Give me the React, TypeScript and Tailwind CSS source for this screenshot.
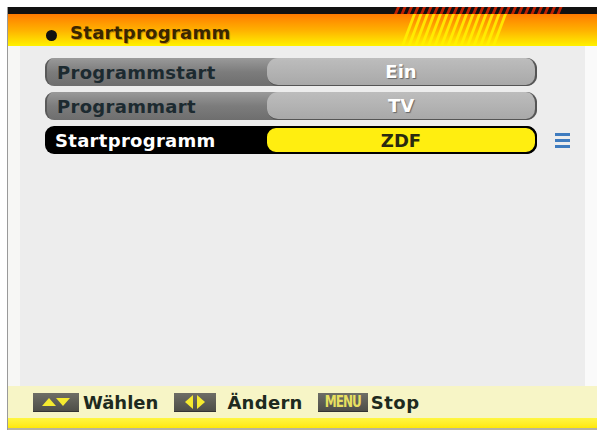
const font = { fontFamily: '"DejaVu Sans", "Liberation Sans", sans-serif' };

const Row = ({ label, value, active }: { label: string; value: string; active?: boolean }) => (
    <div
        className={`flex h-[28px] w-[492px] rounded-l-[9px] rounded-r-[10px] ${
            active ? "bg-black" : "bg-gradient-to-b from-[#9a9a9a] via-[#7c7c7c] to-[#6e6e6e] border-l-2 border-[#5a5a5a]"
        }`}
    >
        <div
            className={`w-[220px] pl-[10px] flex items-center text-[18px] font-bold tracking-[0.3px] ${
                active ? "text-white" : "text-[#1c2a30]"
            }`}
        >
            {label}
        </div>
        <div
            className={`flex-1 flex items-center justify-center rounded-[11px] text-[18px] font-bold ${
                active
                    ? "bg-[#ffee10] border-2 border-black text-[#2a2a10]"
                    : "bg-gradient-to-b from-[#bdbdbd] to-[#a9a9a9] border-r-2 border-b border-[#555] text-white [text-shadow:1px_1px_1px_#666]"
            }`}
        >
            {value}
        </div>
    </div>
);

const KeyBox = ({ w, children }: { w: string; children: React.ReactNode }) => (
    <div className={`${w} h-[19px] flex items-center justify-center bg-gradient-to-b from-[#6e6e66] to-[#4e4e48] border-b border-[#333]`}>
        {children}
    </div>
);

const App = () => {
    return (
        <div className="w-[601px] h-[432px] bg-white pt-[7px] pl-[7px] pr-[4px] pb-[2px]" style={font}>
            <div className="flex flex-col h-full border-l border-[#9a9a9a]">
                {/* header */}
                <div className="relative h-[39px] shrink-0">
                    <div className="h-[7px] bg-[#111]" />
                    <div className="h-[32px] bg-gradient-to-b from-[#ff7a00] via-[#ffb000] to-[#fff200] flex items-center pl-[38px] pt-[5px]">
                        <span className="w-[11px] h-[11px] rounded-full bg-[#111] mr-[13px] mt-[5px]" />
                        <span className="text-[18px] font-bold tracking-[0.3px] text-[#3a2600] [text-shadow:1px_1px_0_#d09000]">
                            Startprogramm
                        </span>
                    </div>
                    <svg className="absolute left-[383px] top-0" width="180" height="39" viewBox="0 0 180 39">
                        {Array.from({ length: 26 }).map((_, i) => (
                            <polygon
                                key={"r" + i}
                                points={`${6 + i * 6.5},0 ${9 + i * 6.5},0 ${6 + i * 6.5},7 ${3 + i * 6.5},7`}
                                fill="#c02000"
                            />
                        ))}
                        {Array.from({ length: 15 }).map((_, i) => (
                            <polygon
                                key={"y" + i}
                                points={`${22 + i * 6.5},7 ${25 + i * 6.5},7 ${13 + i * 6.5},39 ${10 + i * 6.5},39`}
                                fill="#fff200"
                                opacity="0.85"
                            />
                        ))}
                    </svg>
                </div>
                {/* content */}
                <div className="flex-1 flex bg-[#ededed]">
                    <div className="w-[12px] bg-[#f7f7f5]" />
                    <div className="flex-1 pt-[12px] pl-[25px] flex flex-col gap-[6px]">
                        <Row label="Programmstart" value="Ein" />
                        <Row label="Programmart" value="TV" />
                        <div className="flex items-center">
                            <Row label="Startprogramm" value="ZDF" active />
                            <div className="ml-[18px] flex flex-col gap-[3px]">
                                <span className="w-[15px] h-[3px] bg-[#3f7cbf]" />
                                <span className="w-[15px] h-[3px] bg-[#3f7cbf]" />
                                <span className="w-[15px] h-[3px] bg-[#3f7cbf]" />
                            </div>
                        </div>
                    </div>
                    <div className="w-[12px] bg-[#fafafa]" />
                </div>
                {/* footer */}
                <div className="h-[32px] shrink-0 bg-[#f7f5c6] flex items-center pl-[25px] text-[18px] font-bold text-[#1e2a20]">
                    <KeyBox w="w-[46px]">
                        <svg width="30" height="10" viewBox="0 0 30 10">
                            <polygon points="1,9 8,1 15,9" fill="#f5ea30" />
                            <polygon points="15,1 29,1 22,9" fill="#f5ea30" />
                        </svg>
                    </KeyBox>
                    <span className="ml-[4px]">Wählen</span>
                    <div className="ml-[16px]">
                        <KeyBox w="w-[42px]">
                            <svg width="22" height="14" viewBox="0 0 22 14">
                                <polygon points="1,7 9,0 9,14" fill="#f5ea30" />
                                <polygon points="21,7 13,0 13,14" fill="#f5ea30" />
                            </svg>
                        </KeyBox>
                    </div>
                    <span className="ml-[11px] tracking-[0.3px]">Ändern</span>
                    <div className="ml-[15px]">
                        <KeyBox w="w-[50px]">
                            <span className="text-[12px] font-bold text-[#e8e060] tracking-[-1px] scale-y-125">MENU</span>
                        </KeyBox>
                    </div>
                    <span className="ml-[3px] tracking-[0.5px]">Stop</span>
                </div>
                <div className="h-[10px] shrink-0 bg-gradient-to-b from-[#fff640] to-[#ffe800]" />
                <div className="h-[2px] shrink-0 bg-[#b8b4a0]" />
            </div>
        </div>
    );
};

export default App;
